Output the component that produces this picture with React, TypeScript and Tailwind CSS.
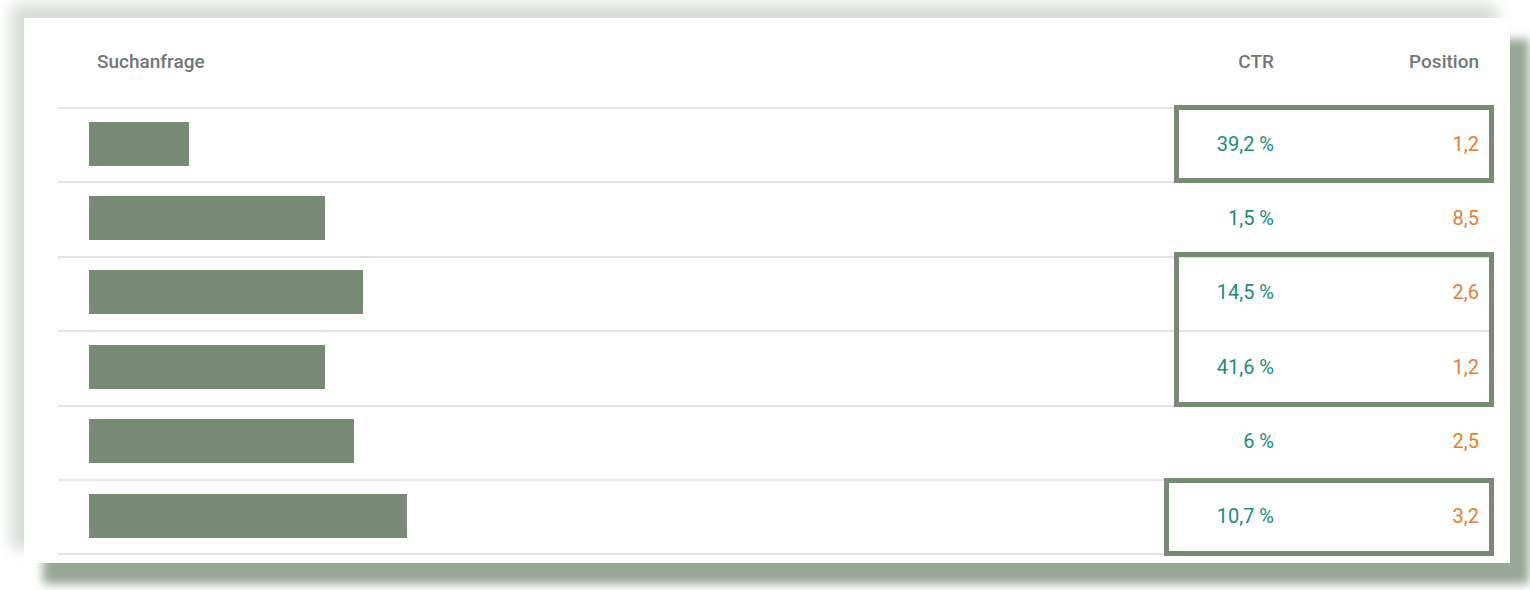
import React from 'react';

type Row = { bar: number; ctr: string; pos: string };

const rows: Row[] = [
  { bar: 100, ctr: '39,2 %', pos: '1,2' },
  { bar: 236, ctr: '1,5 %', pos: '8,5' },
  { bar: 274, ctr: '14,5 %', pos: '2,6' },
  { bar: 236, ctr: '41,6 %', pos: '1,2' },
  { bar: 265, ctr: '6 %', pos: '2,5' },
  { bar: 318, ctr: '10,7 %', pos: '3,2' },
];

function App() {
  return (
    <div className="min-h-screen bg-white pt-[18px] pl-[24px] font-['Roboto',sans-serif]">
      <div className="w-[1486px] h-[545px] bg-white pl-[34px] pr-[17px] shadow-[19px_21px_9px_#97a897,-13px_-14px_14px_#d6ddd6]">
        <div className="relative">
          {/* Header */}
          <div className="flex items-center h-[91px] border-b-2 border-[#e4e4e4] text-[19px] font-medium text-[#757575]">
            <div className="flex-1 pl-[39px]">Suchanfrage</div>
            <div className="w-[150px] text-right">CTR</div>
            <div className="w-[219px] pr-[14px] text-right">Position</div>
          </div>

          {/* Rows */}
          {rows.map((row, i) => (
            <div
              key={i}
              className="flex items-center h-[74.4px] border-b-2 border-[#e4e4e4] text-[20px]"
            >
              <div className="flex-1 pl-[31px]">
                <div className="h-[44px] mb-[3px] bg-[#778a74]" style={{ width: row.bar }} />
              </div>
              <div className="w-[150px] pb-[3px] text-right text-[#1a8b7a]">{row.ctr}</div>
              <div className="w-[219px] pb-[3px] pr-[14px] text-right text-[#e67d36]">{row.pos}</div>
            </div>
          ))}

          {/* Highlight boxes */}
          <div className="absolute left-[1116px] top-[87px] w-[320px] h-[78px] border-[5px] border-[#778a74]" />
          <div className="absolute left-[1116px] top-[234px] w-[320px] h-[155px] border-[5px] border-[#778a74]" />
          <div className="absolute left-[1106px] top-[460px] w-[330px] h-[78px] border-[5px] border-[#778a74]" />
        </div>
      </div>
    </div>
  );
}

export default App;
